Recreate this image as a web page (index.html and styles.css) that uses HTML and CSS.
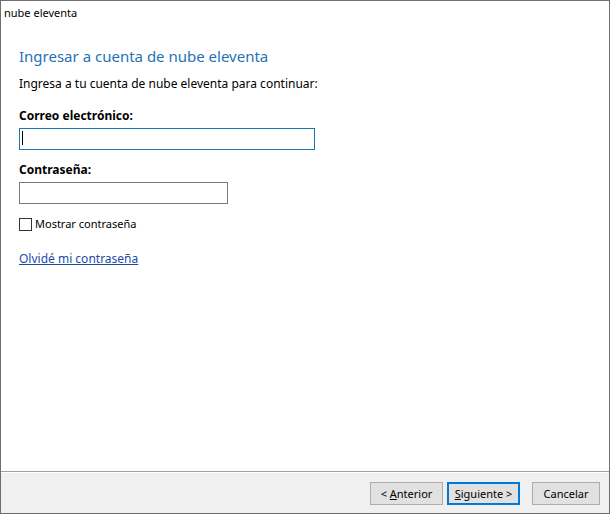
FILE: index.html
```html
<!DOCTYPE html>
<html lang="es">
<head>
    <meta charset="UTF-8">
    <meta name="viewport" content="width=device-width, initial-scale=1.0">
    <title>nube eleventa</title>
    <link rel="stylesheet" href="styles.css">
</head>
<body>
    <form class="window">
        <header class="title-bar">nube eleventa</header>

        <main class="content">
            <h1 class="title">Ingresar a cuenta de nube eleventa</h1>
            <p class="intro">Ingresa a tu cuenta de nube eleventa para continuar:</p>

            <label class="form-label" for="email">Correo electrónico:</label>
            <input type="text" class="input-field input-email" id="email">

            <label class="form-label" for="password">Contraseña:</label>
            <input type="password" class="input-field input-password" id="password">

            <div class="checkbox-row">
                <input type="checkbox" class="checkbox" id="showPassword">
                <label for="showPassword">Mostrar contraseña</label>
            </div>

            <a href="#" class="forgot-link">Olvidé mi contraseña</a>
        </main>

        <footer class="buttons-container">
            <button type="button" class="button">&lt; <u>A</u>nterior</button>
            <button type="submit" class="button button-default"><u>S</u>iguiente &gt;</button>
            <button type="button" class="button button-cancel">Cancelar</button>
        </footer>
    </form>
    <script>
        document.getElementById('showPassword').addEventListener('change', function(e) {
            document.getElementById('password').type = e.target.checked ? 'text' : 'password';
        });
    </script>
</body>
</html>
```
FILE: styles.css
```css
* {
    margin: 0;
    padding: 0;
    box-sizing: border-box;
}

body {
    font-family: "Noto Sans", "Open Sans", sans-serif;
    font-size: 12px;
    line-height: 16px;
    color: #000;
}

.window {
    display: flex;
    flex-direction: column;
    min-height: 100vh;
    background-color: #fff;
    border: 1px solid #6f6d6e;
}

.title-bar {
    padding: 4px 3px;
    font-size: 11px;
}

.content {
    display: flex;
    flex-direction: column;
    align-items: flex-start;
    flex: 1;
    padding: 19px 18px;
}

.title {
    font-size: 15px;
    line-height: 24px;
    font-weight: normal;
    color: #1f72b5;
    margin-bottom: 8px;
}

.intro {
    margin-bottom: 16px;
}

.form-label {
    font-weight: bold;
    margin-bottom: 4px;
}

.input-field {
    height: 22px;
    padding: 0 4px;
    border: 1px solid #7a7a7a;
    background-color: #fff;
    font: inherit;
    outline: none;
    margin-bottom: 12px;
}

.input-email {
    width: 296px;
    border-color: #1c78b4;
    background-image: linear-gradient(#000, #000);
    background-repeat: no-repeat;
    background-size: 1px 14px;
    background-position: 2px 2px;
}

.input-password {
    width: 209px;
}

.checkbox-row {
    display: flex;
    align-items: center;
    gap: 3px;
    font-size: 11px;
    margin-bottom: 19px;
}

.checkbox {
    appearance: none;
    width: 13px;
    height: 13px;
    border: 1px solid #333;
    background-color: #fff;
}

.checkbox:checked {
    background-color: #0078d7;
}

.forgot-link {
    color: #1a4ba8;
}

.buttons-container {
    display: flex;
    justify-content: flex-end;
    gap: 4px;
    padding: 10px 9px 8px;
    background-color: #f0f0f0;
    border-top: 1px solid #a0a0a0;
    box-shadow: inset 0 1px #fff;
}

.button {
    width: 73px;
    height: 23px;
    border: 1px solid #adadad;
    background-color: #e1e1e1;
    font: inherit;
    font-size: 11px;
    color: #000;
}

.button-default {
    border: 2px solid #0078d7;
}

.button-cancel {
    width: 68px;
    margin-left: 8px;
}
```
